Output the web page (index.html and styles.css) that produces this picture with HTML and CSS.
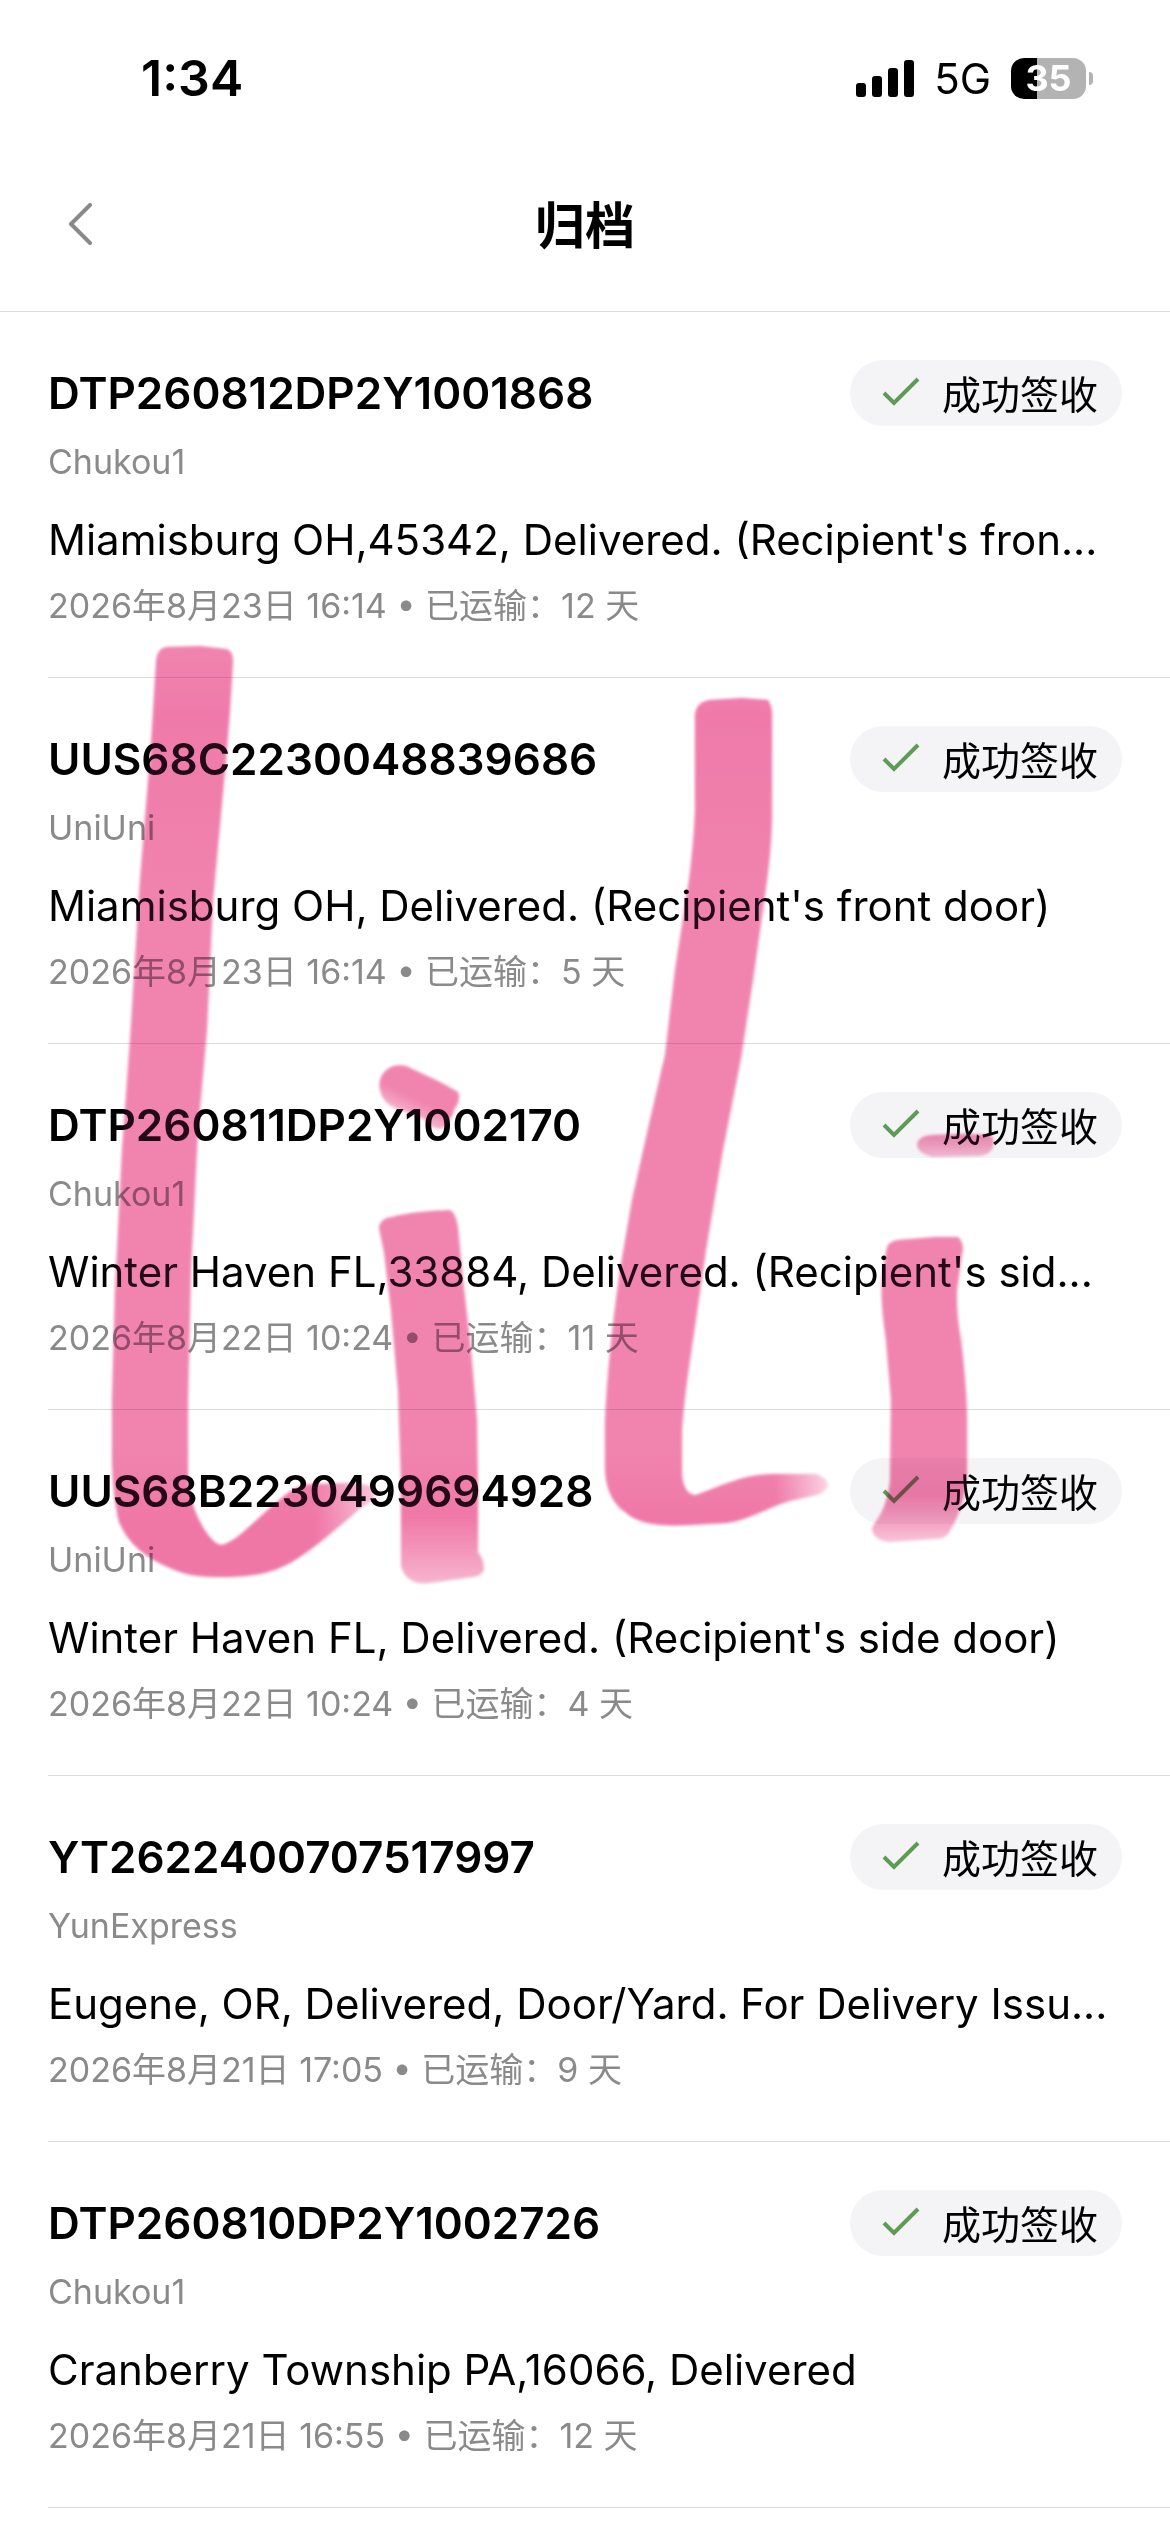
FILE: index.html
```html
<!DOCTYPE html>
<html lang="zh-CN">
<head>
    <meta charset="UTF-8">
    <meta name="viewport" content="width=device-width, initial-scale=1.0">
    <title>归档</title>
    <link rel="stylesheet" href="styles.css">
</head>
<body>
    <div class="status-bar">
        <span class="time">1:34</span>
        <div class="status-icons">
            <svg class="signal" viewBox="0 0 58 37" aria-hidden="true">
                <rect x="0" y="23" width="10" height="14" rx="3"/>
                <rect x="16" y="16" width="10" height="21" rx="3"/>
                <rect x="32" y="8" width="10" height="29" rx="3"/>
                <rect x="48" y="0" width="10" height="37" rx="3"/>
            </svg>
            <span class="network">5G</span>
            <div class="battery"><span class="battery-level">35</span></div>
        </div>
    </div>

    <header class="nav-bar">
        <button class="back-button" type="button" aria-label="返回">
            <svg viewBox="0 0 26 42" aria-hidden="true"><path d="M23 2 4 21l19 19"/></svg>
        </button>
        <h1>归档</h1>
    </header>

    <main>
        <ul class="parcels">
            <li class="parcel">
                <div class="parcel-head">
                    <h2>DTP260812DP2Y1001868</h2>
                    <span class="badge"><svg viewBox="0 0 38 30" aria-hidden="true"><path d="M2 16l10 10L36 2"/></svg>成功签收</span>
                </div>
                <p class="carrier">Chukou1</p>
                <p class="event">Miamisburg OH,45342, Delivered. (Recipient's fron...</p>
                <p class="meta">2026年8月23日 16:14 • 已运输：12 天</p>
            </li>
            <li class="parcel">
                <div class="parcel-head">
                    <h2>UUS68C2230048839686</h2>
                    <span class="badge"><svg viewBox="0 0 38 30" aria-hidden="true"><path d="M2 16l10 10L36 2"/></svg>成功签收</span>
                </div>
                <p class="carrier">UniUni</p>
                <p class="event">Miamisburg OH, Delivered. (Recipient's front door)</p>
                <p class="meta">2026年8月23日 16:14 • 已运输：5 天</p>
            </li>
            <li class="parcel">
                <div class="parcel-head">
                    <h2>DTP260811DP2Y1002170</h2>
                    <span class="badge"><svg viewBox="0 0 38 30" aria-hidden="true"><path d="M2 16l10 10L36 2"/></svg>成功签收</span>
                </div>
                <p class="carrier">Chukou1</p>
                <p class="event">Winter Haven FL,33884, Delivered. (Recipient's sid...</p>
                <p class="meta">2026年8月22日 10:24 • 已运输：11 天</p>
            </li>
            <li class="parcel">
                <div class="parcel-head">
                    <h2>UUS68B2230499694928</h2>
                    <span class="badge"><svg viewBox="0 0 38 30" aria-hidden="true"><path d="M2 16l10 10L36 2"/></svg>成功签收</span>
                </div>
                <p class="carrier">UniUni</p>
                <p class="event">Winter Haven FL, Delivered. (Recipient's side door)</p>
                <p class="meta">2026年8月22日 10:24 • 已运输：4 天</p>
            </li>
            <li class="parcel">
                <div class="parcel-head">
                    <h2>YT2622400707517997</h2>
                    <span class="badge"><svg viewBox="0 0 38 30" aria-hidden="true"><path d="M2 16l10 10L36 2"/></svg>成功签收</span>
                </div>
                <p class="carrier">YunExpress</p>
                <p class="event">Eugene, OR, Delivered, Door/Yard. For Delivery Issu...</p>
                <p class="meta">2026年8月21日 17:05 • 已运输：9 天</p>
            </li>
            <li class="parcel">
                <div class="parcel-head">
                    <h2>DTP260810DP2Y1002726</h2>
                    <span class="badge"><svg viewBox="0 0 38 30" aria-hidden="true"><path d="M2 16l10 10L36 2"/></svg>成功签收</span>
                </div>
                <p class="carrier">Chukou1</p>
                <p class="event">Cranberry Township PA,16066, Delivered</p>
                <p class="meta">2026年8月21日 16:55 • 已运输：12 天</p>
            </li>
        </ul>
    </main>

    <!-- Marker strokes over the list: a multiply pass, then a thin tint so dark text picks up colour -->
    <svg class="marker marker-ink" viewBox="90 630 930 970" aria-hidden="true">
        <defs>
            <filter id="soft" x="-5%" y="-5%" width="110%" height="110%">
                <feGaussianBlur stdDeviation="1.8"/>
            </filter>
            <linearGradient id="fadeL" gradientUnits="userSpaceOnUse" x1="315" y1="0" x2="376" y2="0">
                <stop offset="0" stop-color="#fff"/>
                <stop offset="1" stop-color="#fff" stop-opacity="0.4"/>
            </linearGradient>
            <linearGradient id="fadeL2" gradientUnits="userSpaceOnUse" x1="775" y1="0" x2="828" y2="0">
                <stop offset="0" stop-color="#fff"/>
                <stop offset="1" stop-color="#fff" stop-opacity="0.3"/>
            </linearGradient>
            <linearGradient id="fadeI" gradientUnits="userSpaceOnUse" x1="0" y1="1515" x2="0" y2="1584">
                <stop offset="0" stop-color="#fff"/>
                <stop offset="1" stop-color="#fff" stop-opacity="0.5"/>
            </linearGradient>
            <linearGradient id="fadeI2" gradientUnits="userSpaceOnUse" x1="0" y1="1495" x2="0" y2="1542">
                <stop offset="0" stop-color="#fff"/>
                <stop offset="1" stop-color="#fff" stop-opacity="0.4"/>
            </linearGradient>
            <linearGradient id="fadeDot" gradientUnits="userSpaceOnUse" x1="418" y1="1100" x2="406" y2="1126">
                <stop offset="0" stop-color="#fff"/>
                <stop offset="1" stop-color="#fff" stop-opacity="0.35"/>
            </linearGradient>
            <linearGradient id="fadeDot2" gradientUnits="userSpaceOnUse" x1="0" y1="1134" x2="0" y2="1158">
                <stop offset="0" stop-color="#fff"/>
                <stop offset="1" stop-color="#fff" stop-opacity="0.45"/>
            </linearGradient>
            <linearGradient id="shade" gradientUnits="userSpaceOnUse" x1="0" y1="640" x2="0" y2="1590">
                <stop offset="0" stop-color="#ee90b3"/>
                <stop offset="0.08" stop-color="#ed84ab"/>
                <stop offset="0.3" stop-color="#ee90b2"/>
                <stop offset="0.85" stop-color="#ee90b2"/>
                <stop offset="0.93" stop-color="#ed80a8"/>
                <stop offset="1" stop-color="#ed80a8"/>
            </linearGradient>
            <mask id="strokes" maskUnits="userSpaceOnUse" x="90" y="630" width="930" height="970">
                <g filter="url(#soft)">
                    <path fill="url(#fadeL)" d="M156 662Q157 648 167 647L200 646 226 649Q233 650 233 662L230 710 226 760 213 900 207 1030 198 1130 191 1270 188 1400V1475Q189 1500 199 1520Q212 1545 222 1545C238 1541 258 1517 276 1503C290 1490 300 1484 315 1484L350 1483Q368 1484 373 1487Q377 1494 372 1501Q362 1506 354 1514C330 1534 303 1558 282 1567C262 1576 240 1577 215 1577C195 1577 180 1573 170 1568C145 1558 128 1543 119 1522Q113 1498 112 1460V1400L115 1290 122 1150 130 1040 140 880 151 745Z"/>
                    <path fill="url(#fadeI)" d="M379 1228Q380 1218 392 1217C410 1212 432 1211 450 1210Q456 1213 458 1228L463 1280 471 1350 477 1420 478 1500V1552Q484 1560 484 1570 481 1576 473 1577L430 1583C409 1586 401 1572 401 1563V1480L398 1390 391 1310 384 1252Z"/>
                    <path fill="url(#fadeDot)" d="M380 1090C377 1074 390 1062 406 1066L440 1082 458 1092Q461 1100 455 1108 449 1126 440 1129 430 1128 424 1119L395 1108Q382 1102 380 1090Z"/>
                    <path fill="url(#fadeL2)" d="M695 715Q696 702 710 700L742 698 768 700Q772 706 772 715V820Q771 855 765 895L753 980 741 1058 722 1155 706 1250 693 1340Q684 1398 682 1430V1475Q684 1495 696 1495C720 1487 740 1475 773 1474L816 1474Q828 1478 828 1486 824 1494 812 1496L790 1501C768 1507 750 1520 726 1523L690 1525C665 1526 640 1526 625 1512 608 1500 605 1480 605 1465V1420Q608 1355 620 1270L632 1200 650 1120 665 1055 675 970 689 880Q694 840 695 810Z"/>
                    <path fill="url(#fadeI2)" d="M886 1252Q887 1241 898 1240L935 1237 958 1237Q965 1244 962 1254L957 1290Q956 1312 961 1340 967 1390 967 1420V1470C966 1500 956 1522 948 1534Q944 1539 935 1539L890 1542C875 1541 870 1531 873 1526 880 1516 888 1504 890 1480L891 1400 886 1340Q880 1300 882 1280Z"/>
                    <path fill="url(#fadeDot2)" d="M917 1145Q918 1135 935 1135L965 1134 990 1135Q996 1140 992 1149 988 1156 978 1156L935 1157Q919 1155 917 1145Z"/>
                </g>
            </mask>
        </defs>
        <rect x="90" y="630" width="930" height="970" fill="url(#shade)" mask="url(#strokes)"/>
    </svg>
    <svg class="marker marker-tint" viewBox="90 630 930 970" aria-hidden="true">
        <rect x="90" y="630" width="930" height="970" mask="url(#strokes)"/>
    </svg>
</body>
</html>
```
FILE: styles.css
```css
* {
    margin: 0;
    padding: 0;
    box-sizing: border-box;
}

body {
    position: relative;
    font-family: Inter, 'Noto Sans CJK SC', sans-serif;
    background: #fff;
    color: #000;
}

.status-bar {
    display: flex;
    align-items: center;
    justify-content: space-between;
    height: 156px;
    padding: 0 78px 0 141px;
}

.time {
    font-size: 50px;
    font-weight: 600;
}

.status-icons {
    display: flex;
    align-items: center;
    gap: 20px;
}

.signal {
    width: 58px;
    height: 37px;
}

.network {
    font-size: 42px;
}

.battery {
    position: relative;
    width: 75px;
    height: 41px;
    margin-right: 6px;
    border-radius: 13px;
    background: linear-gradient(to right, #000 35%, #b3b3b3 35%);
    text-align: center;
}

.battery::after {
    content: "";
    position: absolute;
    top: 14px;
    right: -7px;
    width: 4px;
    height: 13px;
    border-radius: 0 4px 4px 0;
    background: #b3b3b3;
}

.battery-level {
    color: #fff;
    font-size: 36px;
    font-weight: 700;
    line-height: 41px;
}

.nav-bar {
    display: grid;
    grid-template-columns: 80px 1fr 80px;
    align-items: center;
    height: 156px;
    padding: 0 40px 16px;
    border-bottom: 1px solid #dcdcdc;
}

.back-button {
    width: 80px;
    height: 80px;
    border: none;
    background: none;
    cursor: pointer;
}

.back-button svg {
    width: 26px;
    height: 42px;
    fill: none;
    stroke: #8a8a8a;
    stroke-width: 4;
    stroke-linecap: round;
    stroke-linejoin: round;
}

h1 {
    text-align: center;
    font-size: 50px;
    font-weight: 700;
    line-height: 60px;
}

.parcels {
    list-style: none;
    padding-left: 48px;
}

.parcel {
    padding: 48px 48px 47px 0;
    border-bottom: 1px solid #dcdcdc;
}

.parcel-head {
    display: flex;
    align-items: center;
    justify-content: space-between;
    height: 66px;
    margin-bottom: 12px;
}

h2 {
    font-size: 44px;
    font-weight: 600;
    line-height: 64px;
}

.badge {
    display: flex;
    align-items: center;
    gap: 22px;
    height: 66px;
    padding: 0 24px 2px 32px;
    border-radius: 33px;
    background: #f4f4f7;
    font-size: 39px;
}

.badge svg {
    width: 38px;
    height: 30px;
    fill: none;
    stroke: #5d9c55;
    stroke-width: 4;
}

.carrier,
.meta {
    color: #8a8a8a;
    font-size: 34px;
    line-height: 48px;
}

.event {
    margin: 24px 0 12px;
    font-size: 42px;
    line-height: 60px;
    white-space: nowrap;
    overflow: hidden;
    text-overflow: ellipsis;
}

.marker {
    position: absolute;
    top: 630px;
    left: 90px;
    width: 930px;
    height: 970px;
    pointer-events: none;
}

.marker-ink {
    mix-blend-mode: multiply;
}

.marker-tint {
    fill: #ff43a0;
    opacity: 0.14;
}
```
